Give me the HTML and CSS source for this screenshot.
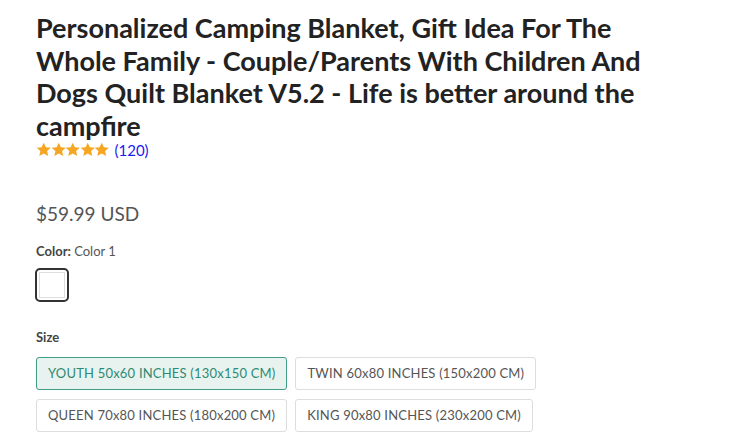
FILE: index.html
```html
<!DOCTYPE html>
<html lang="en">
<head>
<meta charset="utf-8">
<title>Personalized Camping Blanket</title>
<link rel="stylesheet" href="styles.css">
</head>
<body>
<main class="product">
  <h1 class="title">Personalized Camping Blanket, Gift Idea For The Whole Family - Couple/Parents With Children And Dogs Quilt Blanket V5.2 - Life is better around the campfire</h1>
  <div class="rating">
    <span class="stars">
      <svg viewBox="0 0 24 24" class="star"><path d="M12 1l3.3 7 7.7.8-5.8 5.2 1.7 7.6L12 17.7l-6.9 3.9 1.7-7.6L1 8.8l7.7-.8z"/></svg>
      <svg viewBox="0 0 24 24" class="star"><path d="M12 1l3.3 7 7.7.8-5.8 5.2 1.7 7.6L12 17.7l-6.9 3.9 1.7-7.6L1 8.8l7.7-.8z"/></svg>
      <svg viewBox="0 0 24 24" class="star"><path d="M12 1l3.3 7 7.7.8-5.8 5.2 1.7 7.6L12 17.7l-6.9 3.9 1.7-7.6L1 8.8l7.7-.8z"/></svg>
      <svg viewBox="0 0 24 24" class="star"><path d="M12 1l3.3 7 7.7.8-5.8 5.2 1.7 7.6L12 17.7l-6.9 3.9 1.7-7.6L1 8.8l7.7-.8z"/></svg>
      <svg viewBox="0 0 24 24" class="star"><path d="M12 1l3.3 7 7.7.8-5.8 5.2 1.7 7.6L12 17.7l-6.9 3.9 1.7-7.6L1 8.8l7.7-.8z"/></svg>
    </span>
    <a class="count" href="#">(120)</a>
  </div>
  <div class="price">$59.99 USD</div>
  <div class="option">
    <div class="label"><b>Color:</b> Color 1</div>
    <div class="swatches">
      <span class="swatch"><span class="swatch-inner"></span></span>
    </div>
  </div>
  <div class="option option-size">
    <div class="label"><b>Size</b></div>
    <div class="sizes">
      <span class="size active">YOUTH 50x60 INCHES (130x150 CM)</span>
      <span class="size">TWIN 60x80 INCHES (150x200 CM)</span>
      <span class="size">QUEEN 70x80 INCHES (180x200 CM)</span>
      <span class="size">KING 90x80 INCHES (230x200 CM)</span>
    </div>
  </div>
</main>
</body>
</html>
```

FILE: styles.css
```css
html, body {
  margin: 0;
  padding: 0;
  background: #ffffff;
}
body {
  font-family: "Lato", "Open Sans", sans-serif;
  color: #444;
}
.product {
  width: 620px;
  padding: 12px 0 0 36px;
}
.title {
  margin: 0;
  font-size: 27px;
  line-height: 32.5px;
  font-weight: 700;
  color: #222;
}
.rating {
  display: flex;
  align-items: center;
  gap: 6px;
  height: 22px;
  margin-top: -3px;
}
.stars {
  display: flex;
}
.star {
  width: 15.5px;
  height: 15.5px;
  margin-right: -1px;
  fill: #f5a623;
}
.count {
  color: #1a1aee;
  text-decoration: none;
  font-size: 15px;
}
.price {
  margin-top: 41px;
  font-size: 19px;
  color: #555;
  line-height: 24px;
}
.option {
  margin-top: 16px;
}
.option-size {
  margin-top: 26px;
}
.label {
  font-size: 13px;
  color: #555;
  line-height: 18px;
}
.label b {
  font-weight: 700;
  color: #444;
}
.swatches {
  margin-top: 8px;
  display: flex;
}
.swatch {
  width: 26px;
  height: 26px;
  border: 2px solid #333;
  border-radius: 5px;
  padding: 2px;
  box-sizing: content-box;
  margin-left: -1px;
}
.swatch-inner {
  display: block;
  width: 24px;
  height: 24px;
  border: 1px solid #ddd;
  background: #fff;
}
.sizes {
  margin-top: 11px;
  display: flex;
  flex-wrap: wrap;
  gap: 9px 8px;
}
.size {
  display: inline-block;
  padding: 0 11px;
  height: 33px;
  box-sizing: border-box;
  line-height: 31px;
  border: 1px solid #ddd;
  border-radius: 3px;
  font-size: 13px;
  letter-spacing: 0.2px;
  color: #555;
  white-space: nowrap;
}
.size.active {
  background: #e8f3ef;
  border-color: #3f9d85;
  color: #2e8a73;
}
```
